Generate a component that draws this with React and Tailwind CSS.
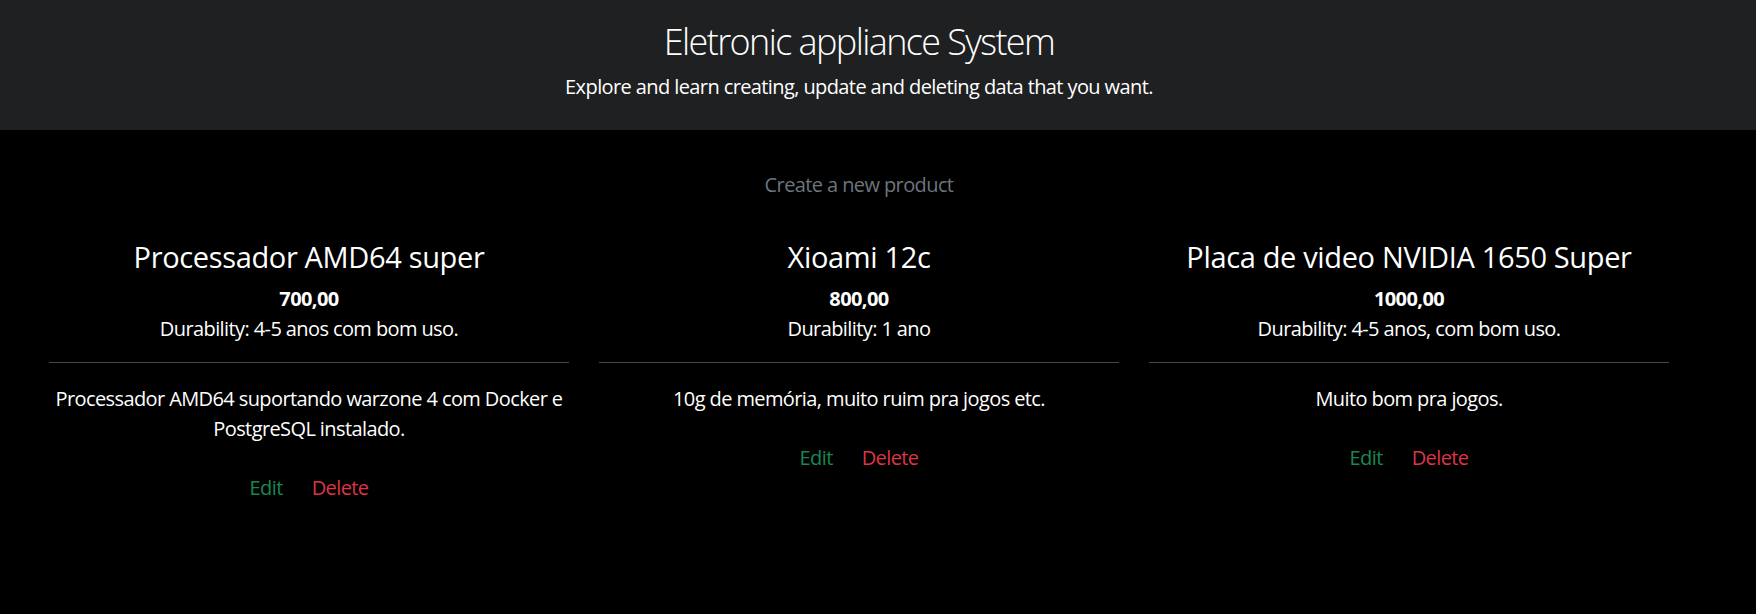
const products = [
  {
    id: 1,
    name: 'Processador AMD64 super',
    price: '700,00',
    durability: '4-5 anos com bom uso.',
    description: 'Processador AMD64 suportando warzone 4 com Docker e PostgreSQL instalado.',
  },
  {
    id: 2,
    name: 'Xioami 12c',
    price: '800,00',
    durability: '1 ano',
    description: '10g de memória, muito ruim pra jogos etc.',
  },
  {
    id: 3,
    name: 'Placa de video NVIDIA 1650 Super',
    price: '1000,00',
    durability: '4-5 anos, com bom uso.',
    description: 'Muito bom pra jogos.',
  },
];

function ProductCard({ product }) {
  return (
    <div className="text-center">
      <h3 className="text-[29px] leading-[35px] font-normal tracking-[-0.35px] text-white">{product.name}</h3>
      <p className="mt-[10px] text-[20px] leading-[30px] font-bold text-white">{product.price}</p>
      <p className="text-[20px] leading-[30px] text-white">Durability: {product.durability}</p>
      <hr className="mt-[18px] border-0 border-t border-[#4a4a4a]" />
      <p className="mt-[21px] text-[20px] leading-[30px] text-white">{product.description}</p>
      <div className="mt-[29px] flex justify-center gap-[29px] text-[20px] leading-[30px]">
        <a href="#" className="text-[#198754]">Edit</a>
        <a href="#" className="text-[#dc3545]">Delete</a>
      </div>
    </div>
  );
}

export default function App() {
  return (
    <div className="min-h-[614px] bg-black font-['Open_Sans',sans-serif] tracking-[-0.6px]">
      <header className="h-[130px] bg-[#1f2022]">
        <div className="w-[1718px] pt-[20px] text-center">
          <h1 className="text-[36px] leading-[43px] font-light tracking-[-1.6px] text-white">Eletronic appliance System</h1>
          <p className="mt-[9px] text-[20px] leading-[30px] text-white">
            Explore and learn creating, update and deleting data that you want.
          </p>
        </div>
      </header>

      <main className="w-[1718px] px-[49px]">
        <div className="pt-[40px] text-center">
          <a href="#" className="text-[20px] leading-[30px] text-[#6c757d]">Create a new product</a>
        </div>
        <div className="mt-[39px] grid grid-cols-3 gap-[30px]">
          {products.map((product) => (
            <ProductCard key={product.id} product={product} />
          ))}
        </div>
      </main>
    </div>
  );
}
